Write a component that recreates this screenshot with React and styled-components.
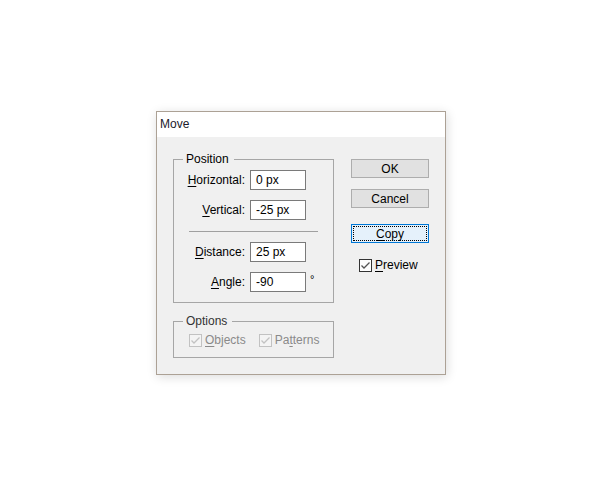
import React from "react";
import styled, { createGlobalStyle } from "styled-components";

const GlobalStyle = createGlobalStyle`
    html, body {
        margin: 0;
        padding: 0;
        background: #fff;
    }
    body {
        font-family: "Liberation Sans", Arial, sans-serif;
        font-size: 12px;
        color: #000;
    }
`;

const Page = styled.div`
    width: 600px;
    height: 503px;
    padding: 111px 0 0 156px;
    box-sizing: border-box;
`;

const Dialog = styled.div`
    width: 290px;
    height: 264px;
    box-sizing: border-box;
    border: 1px solid #aca195;
    background: #f0f0f0;
    box-shadow: 1px 2px 10px rgba(0, 0, 0, 0.14);
    display: flex;
    flex-direction: column;
`;

const TitleBar = styled.div`
    height: 25px;
    box-sizing: border-box;
    background: #fff;
    padding: 5px 0 0 3px;
    line-height: 14px;
    color: #1a1a2a;
`;

const Body = styled.div`
    flex: 1;
    display: flex;
    gap: 17px;
    padding: 22px 0 0 16px;
`;

const LeftCol = styled.div`
    display: flex;
    flex-direction: column;
    gap: 18px;
`;

const Group = styled.div`
    position: relative;
    width: 161px;
    height: ${(p) => p.$height}px;
    box-sizing: border-box;
    border: 1px solid #a6a6a6;
    padding: ${(p) => p.$pad};
`;

const Legend = styled.span`
    position: absolute;
    top: -8px;
    left: 9px;
    padding: 0 5px 0 3px;
    line-height: 14px;
    background: #f0f0f0;
    color: ${(p) => (p.$disabled ? "#333" : "#000")};
`;

const Row = styled.div`
    display: flex;
    align-items: center;
    height: 20px;
    & + & {
        margin-top: 10px;
    }
`;

const Label = styled.label`
    width: 71px;
    margin-right: 5px;
    text-align: right;
    line-height: 14px;
`;

const Key = styled.u`
    text-decoration-thickness: 1px;
    text-underline-offset: 2px;
`;

const Field = styled.div`
    width: 56px;
    height: 20px;
    box-sizing: border-box;
    border: 1px solid #7a7a7a;
    background: #fff;
    padding: 0 5px;
    line-height: 18px;
`;

const Degree = styled.span`
    margin-left: 4px;
    font-size: 11px;
    position: relative;
    top: -3px;
`;

const Separator = styled.div`
    height: 1px;
    margin: 11px 15px 10px;
    background: #a0a0a0;
`;

const CheckRow = styled.div`
    display: flex;
    align-items: center;
    gap: 13px;
`;

const CheckItem = styled.div`
    display: flex;
    align-items: center;
    gap: 3px;
    margin-left: ${(p) => p.$indent || 0}px;
    line-height: 14px;
    color: ${(p) => (p.$disabled ? "#8a8a8a" : "#000")};
`;

const Box = styled.span`
    width: 13px;
    height: 13px;
    box-sizing: border-box;
    border: 1px solid ${(p) => (p.$disabled ? "#c2c2c2" : "#333")};
    background: ${(p) => (p.$disabled ? "#f4f4f4" : "#fff")};
    display: flex;
    align-items: center;
    justify-content: center;
`;

const RightCol = styled.div`
    width: 78px;
    display: flex;
    flex-direction: column;
`;

const Button = styled.div`
    height: 19px;
    box-sizing: border-box;
    margin-top: ${(p) => p.$top}px;
    border: 1px solid ${(p) => (p.$focus ? "#0078d7" : "#adadad")};
    background: ${(p) => (p.$focus ? "#e5f1fb" : "#e1e1e1")};
    outline: ${(p) => (p.$focus ? "1px dotted #000" : "none")};
    outline-offset: -3px;
    display: flex;
    align-items: center;
    justify-content: center;
    line-height: 14px;
`;

const Check = ({ color }) => (
    <svg width="11" height="11" viewBox="0 0 11 11">
        <path d="M1.5 5.5 L4 8 L9.5 2.5" fill="none" stroke={color} strokeWidth="1.3" />
    </svg>
);

const CheckBox = ({ disabled, indent, children }) => (
    <CheckItem $disabled={disabled} $indent={indent}>
        <Box $disabled={disabled}>
            <Check color={disabled ? "#c2c2c2" : "#555"} />
        </Box>
        <span>{children}</span>
    </CheckItem>
);

const App = () => {
    return (
        <Page>
            <GlobalStyle />
            <Dialog>
                <TitleBar>Move</TitleBar>
                <Body>
                    <LeftCol>
                        <Group $height={144} $pad="10px 0 0 0">
                            <Legend>Position</Legend>
                            <Row>
                                <Label>
                                    <Key>H</Key>orizontal:
                                </Label>
                                <Field>0 px</Field>
                            </Row>
                            <Row>
                                <Label>
                                    <Key>V</Key>ertical:
                                </Label>
                                <Field>-25 px</Field>
                            </Row>
                            <Separator />
                            <Row>
                                <Label>
                                    <Key>D</Key>istance:
                                </Label>
                                <Field>25 px</Field>
                            </Row>
                            <Row>
                                <Label>
                                    <Key>A</Key>ngle:
                                </Label>
                                <Field>-90</Field>
                                <Degree>°</Degree>
                            </Row>
                        </Group>
                        <Group $height={37} $pad="11px 0 0 15px">
                            <Legend $disabled>Options</Legend>
                            <CheckRow>
                                <CheckBox disabled>
                                    <Key>O</Key>bjects
                                </CheckBox>
                                <CheckBox disabled>
                                    Pa<Key>t</Key>terns
                                </CheckBox>
                            </CheckRow>
                        </Group>
                    </LeftCol>
                    <RightCol>
                        <Button $top={0}>OK</Button>
                        <Button $top={11}>Cancel</Button>
                        <Button $top={16} $focus>
                            <span>
                                <Key>C</Key>opy
                            </span>
                        </Button>
                        <div style={{ marginTop: 15 }}>
                            <CheckBox indent={8}>
                                <Key>P</Key>review
                            </CheckBox>
                        </div>
                    </RightCol>
                </Body>
            </Dialog>
        </Page>
    );
};

export default App;
